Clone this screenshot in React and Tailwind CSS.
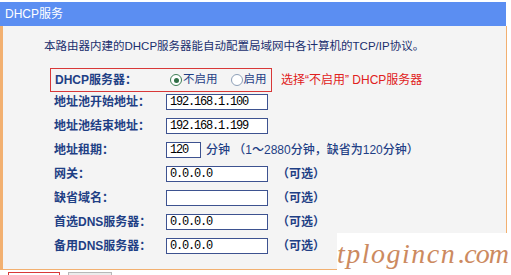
import React from "react";

const rows = [
  { label: "地址池开始地址：", value: "192.168.1.100" },
  { label: "地址池结束地址：", value: "192.168.1.199" },
  { label: "地址租期：", value: "120", lease: true },
  { label: "网关：", value: "0.0.0.0", optional: true },
  { label: "缺省域名：", value: "", optional: true },
  { label: "首选DNS服务器：", value: "0.0.0.0", optional: true },
  { label: "备用DNS服务器：", value: "0.0.0.0", optional: true },
];

const Radio = ({ checked }) => (
  <span
    className={`shrink-0 inline-flex items-center justify-center w-[12px] h-[12px] rounded-full border bg-white ${
      checked ? "border-[#3f7f55]" : "border-[#8ea0b8]"
    }`}
  >
    {checked && <span className="w-[5px] h-[5px] rounded-full bg-[#2f6f45]" />}
  </span>
);

const Field = ({ value, w }) => (
  <div
    className={`${w} shrink-0 h-[16px] border border-[#3d5290] bg-white pl-[3px] flex items-center font-['Liberation_Mono',monospace] text-[12px] tracking-[-1.2px] text-black`}
  >
    {value}
  </div>
);

export default function App() {
  return (
    <div className="relative w-[511px] h-[275px] overflow-hidden bg-white font-['Liberation_Sans','Noto_Sans_CJK_SC',sans-serif] text-[12px] whitespace-nowrap">
      <div className="pt-[2px]">
        <div className="w-[506px] h-[24px] bg-[#5b8ef2] text-white pl-[5px] flex items-center">
          DHCP服务
        </div>
        <div className="w-[507px] h-[244px] border-l-[3px] border-r border-b border-[#f2b070] bg-[#f4f4f4] flex flex-col">
          <div className="mt-[13px] ml-[41px] h-[14px] leading-[14px] text-[11.5px] text-[#1a2f6e]">
            本路由器内建的DHCP服务器能自动配置局域网中各计算机的TCP/IP协议。
          </div>

          <div className="mt-[15px] flex items-center">
            <div className="ml-[47px] w-[222px] h-[24px] border border-[#d83838] flex items-center">
              <span className="ml-[4px] w-[115px] shrink-0 font-bold text-[#1f3f85]">DHCP服务器：</span>
              <Radio checked />
              <span className="ml-[1px] text-[11.5px] text-[#1f3f85]">不启用</span>
              <span className="ml-[13px] flex">
                <Radio />
              </span>
              <span className="ml-[1px] text-[11.5px] text-[#1f3f85]">启用</span>
            </div>
            <span className="ml-[9px] text-[#e02020]">选择“不启用” DHCP服务器</span>
          </div>

          <div className="-mt-[2px] flex flex-col">
            {rows.map((r) => (
              <div key={r.label} className="h-[24px] flex items-center">
                <span className="ml-[51px] w-[112px] shrink-0 font-bold text-[#1f3f85]">{r.label}</span>
                {r.lease ? (
                  <>
                    <Field value={r.value} w="w-[35px]" />
                    <span className="ml-[5px] text-[#1f3f85] font-medium">
                      分钟 （1～2880分钟，缺省为120分钟）
                    </span>
                  </>
                ) : (
                  <Field value={r.value} w="w-[102px]" />
                )}
                {r.optional && (
                  <span className="ml-[9px] font-bold text-[#1f3f85]">（可选）</span>
                )}
              </div>
            ))}
          </div>
        </div>
        <div className="mt-[2px] flex gap-[8px]">
          <div className="ml-[8px] w-[52px] h-[20px] border border-[#d83838] bg-white" />
          <div className="w-[44px] h-[20px] border border-[#b8b8b8] bg-[#ececec]" />
        </div>
      </div>

      <div className="absolute left-[337px] top-[233px] w-[174px] h-[42px] bg-white flex items-center font-['Liberation_Serif',serif] italic text-[28px] text-[#cc8a60] leading-none">
        <span className="tracking-[1.5px]">tplogincn</span>
        <span className="ml-[2px] tracking-[-1px]">.com</span>
      </div>
    </div>
  );
}
